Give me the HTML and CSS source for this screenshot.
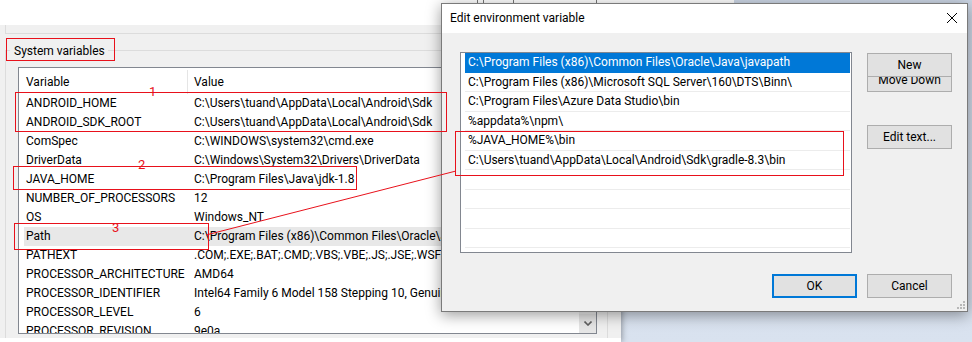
FILE: index.html
```html
<!DOCTYPE html>
<html lang="en">
<head>
	<meta charset="UTF-8">
	<title>Edit environment variable</title>
	<link rel="stylesheet" href="styles.css">
</head>
<body>
	<!-- System Properties window behind -->
	<div class="sysprops">
		<div class="topband"></div>
		<div class="usergroup"></div>
		<div class="group">
			<div class="group-title"><span>System variables</span></div>
			<div class="group-body">
				<div class="listview">
					<div class="lv-body">
						<div class="lv-head"><span class="c1">Variable</span><span class="c2">Value</span></div>
						<div class="lv-row"><span class="c1">ANDROID_HOME</span><span class="c2">C:\Users\tuand\AppData\Local\Android\Sdk</span></div>
						<div class="lv-row"><span class="c1">ANDROID_SDK_ROOT</span><span class="c2">C:\Users\tuand\AppData\Local\Android\Sdk</span></div>
						<div class="lv-row"><span class="c1">ComSpec</span><span class="c2">C:\WINDOWS\system32\cmd.exe</span></div>
						<div class="lv-row"><span class="c1">DriverData</span><span class="c2">C:\Windows\System32\Drivers\DriverData</span></div>
						<div class="lv-row"><span class="c1">JAVA_HOME</span><span class="c2">C:\Program Files\Java\jdk-1.8</span></div>
						<div class="lv-row"><span class="c1">NUMBER_OF_PROCESSORS</span><span class="c2">12</span></div>
						<div class="lv-row"><span class="c1">OS</span><span class="c2">Windows_NT</span></div>
						<div class="lv-row sel"><span class="c1">Path</span><span class="c2">C:\Program Files (x86)\Common Files\Oracle\Java\javapath;C:\Program Files (x86)\Microsoft SQL Server</span></div>
						<div class="lv-row"><span class="c1">PATHEXT</span><span class="c2">.COM;.EXE;.BAT;.CMD;.VBS;.VBE;.JS;.JSE;.WSF;.WSH;.MSC</span></div>
						<div class="lv-row"><span class="c1">PROCESSOR_ARCHITECTURE</span><span class="c2">AMD64</span></div>
						<div class="lv-row"><span class="c1">PROCESSOR_IDENTIFIER</span><span class="c2">Intel64 Family 6 Model 158 Stepping 10, GenuineIntel</span></div>
						<div class="lv-row"><span class="c1">PROCESSOR_LEVEL</span><span class="c2">6</span></div>
						<div class="lv-row"><span class="c1">PROCESSOR_REVISION</span><span class="c2">9e0a</span></div>
					</div>
					<div class="vscroll">
						<div class="sb-down">
							<svg width="8" height="5" viewBox="0 0 8 5"><path d="M0.5 0.5 L4 4 L7.5 0.5" fill="none" stroke="#606060" stroke-width="1.6"/></svg>
						</div>
					</div>
				</div>
			</div>
		</div>
		<div class="bottomband"></div>
	</div>

	<!-- another window peeking out above the dialog -->
	<div class="backstrip"><i></i><i></i><i></i><i></i></div>

	<!-- Edit environment variable dialog -->
	<div class="dialog">
		<div class="titlebar">
			<span>Edit environment variable</span>
			<svg class="close" width="10" height="10" viewBox="0 0 10 10"><path d="M0 0 L10 10 M10 0 L0 10" stroke="#000" stroke-width="1"/></svg>
		</div>
		<div class="dlg-body">
			<div class="dlg-main">
				<ul class="pathlist">
					<li class="sel">C:\Program Files (x86)\Common Files\Oracle\Java\javapath</li>
					<li>C:\Program Files (x86)\Microsoft SQL Server\160\DTS\Binn\</li>
					<li>C:\Program Files\Azure Data Studio\bin</li>
					<li>%appdata%\npm\</li>
					<li>%JAVA_HOME%\bin</li>
					<li>C:\Users\tuand\AppData\Local\Android\Sdk\gradle-8.3\bin</li>
					<li></li>
					<li></li>
					<li></li>
					<li></li>
					<li></li>
				</ul>
				<div class="side">
					<button class="btn new">New</button>
					<button class="btn movedown">Move Down</button>
					<button class="btn edittext">Edit text...</button>
				</div>
			</div>
			<div class="dlg-foot">
				<button class="btn ok">OK</button>
				<button class="btn">Cancel</button>
			</div>
			<svg class="grip" width="8" height="8" viewBox="0 0 8 8">
				<rect x="6" y="0" width="2" height="2" fill="#b8b8b8"/>
				<rect x="3" y="3" width="2" height="2" fill="#b8b8b8"/>
				<rect x="6" y="3" width="2" height="2" fill="#b8b8b8"/>
				<rect x="0" y="6" width="2" height="2" fill="#b8b8b8"/>
				<rect x="3" y="6" width="2" height="2" fill="#b8b8b8"/>
				<rect x="6" y="6" width="2" height="2" fill="#b8b8b8"/>
			</svg>
		</div>
	</div>

	<!-- red annotations drawn over the screenshot -->
	<div class="mark m-sys"></div>
	<div class="mark m1"></div>
	<div class="mark m2"></div>
	<div class="mark m3"></div>
	<div class="mark m4"></div>
	<span class="num n1">1</span>
	<span class="num n2">2</span>
	<span class="num n3">3</span>
	<svg class="arrowline" width="972" height="342" viewBox="0 0 972 342">
		<line x1="206" y1="235" x2="456" y2="171" stroke="#e8111b" stroke-width="1"/>
	</svg>
</body>
</html>
```

FILE: styles.css
```css
/*reset*/
html,body,div,ul,li{
	margin: 0;
	padding: 0;
}
body{
	width: 972px;
	height: 342px;
	overflow: hidden;
	position: relative;
	font: 12px Roboto, "Liberation Sans", Arial, sans-serif;
	color: #000;
	background: linear-gradient(#cdd7e6, #d9e2ef);
}

/*system properties window*/
.sysprops{
	position: absolute;
	left: 0;
	top: 0;
	width: 621px;
	height: 342px;
	background: #f0f0f0;
	display: flex;
	flex-direction: column;
	box-shadow: 1px 0 6px rgba(0,0,0,.35);
}
.topband{
	height: 25px;
	background: #fff;
	flex: none;
}
.usergroup{
	flex: none;
	height: 8px;
	width: 601px;
	margin-left: 5px;
	border: 1px solid #dcdcdc;
	border-top: 0;
}
.group{
	flex: none;
	width: 603px;
	margin: 9px 0 0 5px;
}
.group-title{
	display: flex;
	align-items: flex-end;
	height: 14px;
	line-height: 14px;
}
.group-title:before,
.group-title:after{
	content: "";
	height: 6px;
	border-top: 1px solid #dcdcdc;
}
.group-title:before{
	width: 4px;
	border-left: 1px solid #dcdcdc;
}
.group-title:after{
	flex: 1;
	border-right: 1px solid #dcdcdc;
}
.group-title span{
	align-self: center;
	padding: 1px 3px 0 4px;
}
.group-body{
	border-left: 1px solid #dcdcdc;
	border-right: 1px solid #dcdcdc;
	padding: 10px 10px 4px 12px;
}
.listview{
	height: 267px;
	box-sizing: border-box;
	border: 1px solid #828790;
	background: #fff;
	display: flex;
	overflow: hidden;
}
.lv-body{
	flex: 1;
	min-width: 0;
	padding-top: 2px;
	overflow: hidden;
}
.lv-head{
	display: flex;
	height: 24px;
	line-height: 24px;
	margin-top: -2px;
	padding-top: 2px;
}
.lv-head .c1{
	width: 168px;
	padding-left: 7px;
	box-sizing: border-box;
}
.lv-head .c2{
	border-left: 1px solid #e5e5e5;
	padding-left: 6px;
}
.lv-row{
	display: flex;
	height: 19px;
	line-height: 19px;
	margin-left: 5px;
	white-space: nowrap;
}
.lv-row .c1{
	flex: none;
	width: 163px;
	padding-left: 2px;
	box-sizing: border-box;
	overflow: hidden;
}
.lv-row .c2{
	padding-left: 7px;
}
.lv-row.sel{
	background: #e8e8e8;
}
.vscroll{
	flex: none;
	width: 17px;
	display: flex;
	flex-direction: column;
	justify-content: flex-end;
	background: #f0f0f0;
}
.sb-down{
	height: 19px;
	display: flex;
	align-items: center;
	justify-content: center;
	background: #e6e6e6;
}
.bottomband{
	flex: 1;
	background: #fff;
}

/*window strip behind the dialog*/
.backstrip{
	position: absolute;
	left: 441px;
	top: 0;
	width: 293px;
	height: 3px;
	background: #fff;
	display: flex;
}
.backstrip i{
	width: 1px;
	height: 3px;
	background: #777;
}
.backstrip i:nth-child(1){margin-left: 36px;}
.backstrip i:nth-child(2){margin-left: 5px;}
.backstrip i:nth-child(3){margin-left: 29px;}
.backstrip i:nth-child(4){margin-left: 82px;}

/*dialog*/
.dialog{
	position: absolute;
	left: 441px;
	top: 3px;
	width: 527px;
	height: 309px;
	box-sizing: border-box;
	border: 1px solid #7a7a7a;
	background: #f0f0f0;
	box-shadow: 0 3px 14px rgba(0,0,0,.4);
	display: flex;
	flex-direction: column;
}
.titlebar{
	flex: none;
	height: 29px;
	box-sizing: border-box;
	padding: 0 10px 2px 8px;
	background: #fff;
	display: flex;
	align-items: center;
}
.close{
	margin-left: auto;
}
.dlg-body{
	flex: 1;
	position: relative;
	padding: 19px 15px 0 18px;
	display: flex;
	flex-direction: column;
}
.dlg-main{
	display: flex;
	align-items: flex-start;
	gap: 15px;
}
.pathlist{
	flex: none;
	width: 392px;
	height: 201px;
	box-sizing: border-box;
	border: 1px solid #828790;
	background: #fff;
	list-style-type: none;
	overflow: hidden;
}
.pathlist li{
	height: 19.5px;
	box-sizing: border-box;
	margin: 0 1px 0 4px;
	padding-left: 3px;
	border-bottom: 1px solid #ececec;
	line-height: 19px;
	white-space: nowrap;
}
.pathlist li.sel{
	background: #0078d7;
	border-bottom-color: #0078d7;
	color: #fff;
}
.side{
	width: 85px;
	padding-top: 1px;
	display: flex;
	flex-direction: column;
}
.btn{
	width: 85px;
	height: 24px;
	box-sizing: border-box;
	padding: 0;
	border: 1px solid #adadad;
	background: #e1e1e1;
	font: inherit;
	color: #000;
}
.new{
	position: relative;
	z-index: 1;
}
.movedown{margin-top: -9px;}
.edittext{margin-top: 33px;}
.dlg-foot{
	display: flex;
	justify-content: flex-end;
	gap: 10px;
	margin-top: 21px;
}
.ok{
	border: 2px solid #0078d7;
}
.grip{
	position: absolute;
	right: 2px;
	bottom: 2px;
}

/*annotations*/
.mark{
	position: absolute;
	box-sizing: border-box;
	border: 1px solid #e8111b;
}
.m-sys{left: 6px; top: 38px; width: 109px; height: 23px;}
.m1{left: 15px; top: 92px; width: 432px; height: 40px;}
.m2{left: 13px; top: 166px; width: 344px; height: 24px;}
.m3{left: 14px; top: 223px; width: 195px; height: 27px;}
.m4{left: 455px; top: 131px; width: 389px; height: 45px;}
.num{
	position: absolute;
	color: #e8111b;
	font-size: 13px;
	line-height: 13px;
}
.n1{left: 149px; top: 85px;}
.n2{left: 138px; top: 158px;}
.n3{left: 112px; top: 221px;}
.arrowline{
	position: absolute;
	left: 0;
	top: 0;
	pointer-events: none;
}
```
